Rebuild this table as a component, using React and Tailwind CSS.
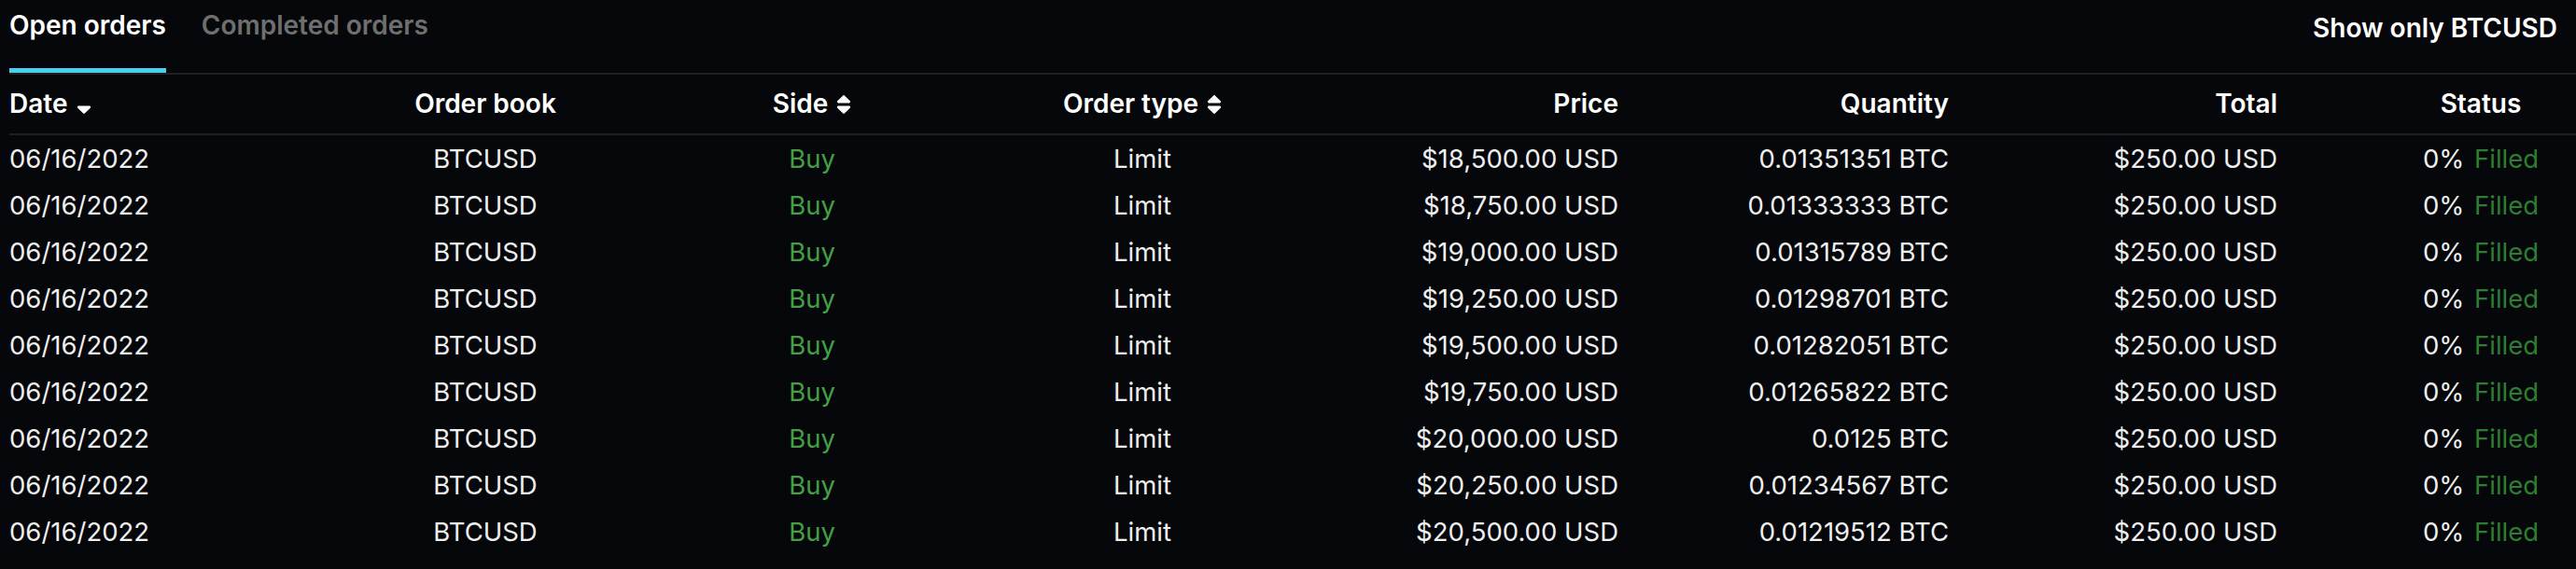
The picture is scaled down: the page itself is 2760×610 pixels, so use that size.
import React from "react";

const rows = [
  ["$18,500.00 USD", "0.01351351 BTC"],
  ["$18,750.00 USD", "0.01333333 BTC"],
  ["$19,000.00 USD", "0.01315789 BTC"],
  ["$19,250.00 USD", "0.01298701 BTC"],
  ["$19,500.00 USD", "0.01282051 BTC"],
  ["$19,750.00 USD", "0.01265822 BTC"],
  ["$20,000.00 USD", "0.0125 BTC"],
  ["$20,250.00 USD", "0.01234567 BTC"],
  ["$20,500.00 USD", "0.01219512 BTC"],
];

const GRID = "grid grid-cols-[330px_360px_340px_368px_326px_354px_352px_1fr]";

function SortIcon() {
  return (
    <svg viewBox="0 0 320 512" className="ml-[9px] h-[26px] w-[16px] shrink-0" fill="currentColor">
      <path d="M41 288h238c21.4 0 32.1 25.9 17 41L177 448c-9.4 9.4-24.6 9.4-33.9 0L24 329c-15.1-15.1-4.4-41 17-41zm255-105L177 64c-9.4-9.4-24.6-9.4-33.9 0L24 183c-15.1 15.1-4.4 41 17 41h238c21.4 0 32.1-25.9 17-41z" />
    </svg>
  );
}

function SortDownIcon() {
  return (
    <svg viewBox="0 0 320 512" className="ml-[10px] h-[26px] w-[16px] shrink-0" fill="currentColor">
      <path d="M41 288h238c21.4 0 32.1 25.9 17 41L177 448c-9.4 9.4-24.6 9.4-33.9 0L24 329c-15.1-15.1-4.4-41 17-41z" />
    </svg>
  );
}

export default function App() {
  return (
    <div className="min-h-screen bg-[#05070a] pl-[10px] font-['Inter',sans-serif] text-[27.5px] leading-[39px] text-[#efefef]">
      <div className="flex items-start justify-between border-b-2 border-[#1f2023] text-[28px]">
        <div className="flex gap-[38px]">
          <button className="border-b-[5px] border-[#4ccfee] pt-[8px] pb-[26px] font-semibold leading-[39px] text-white">
            Open orders
          </button>
          <button className="border-b-[5px] border-transparent pt-[8px] pb-[26px] font-semibold leading-[39px] text-[#6f6f6f]">
            Completed orders
          </button>
        </div>
        <div className="mt-[11px] mr-[20px] font-semibold leading-[39px] text-white">Show only BTCUSD</div>
      </div>

      <div className={`${GRID} h-[65px] items-center border-b-2 border-[#1f2023] text-[28px] font-semibold text-white`}>
        <div className="flex items-center">
          Date
          <SortDownIcon />
        </div>
        <div className="text-center">Order book</div>
        <div className="flex items-center justify-center">
          Side
          <SortIcon />
        </div>
        <div className="flex items-center justify-center">
          Order type
          <SortIcon />
        </div>
        <div className="text-right">Price</div>
        <div className="text-right">Quantity</div>
        <div className="text-right">Total</div>
        <div className="pl-[116px] text-center">Status</div>
      </div>

      {rows.map(([price, qty], i) => (
        <div key={i} className={`${GRID} h-[50px] items-center`}>
          <div>06/16/2022</div>
          <div className="text-center">BTCUSD</div>
          <div className="text-center text-[#43a047]">Buy</div>
          <div className="text-center">Limit</div>
          <div className="text-right">{price}</div>
          <div className="text-right">{qty}</div>
          <div className="text-right">$250.00 USD</div>
          <div className="pl-[116px] text-center">
            0% <span className="ml-[3px] text-[#2e7d32]">Filled</span>
          </div>
        </div>
      ))}
    </div>
  );
}
